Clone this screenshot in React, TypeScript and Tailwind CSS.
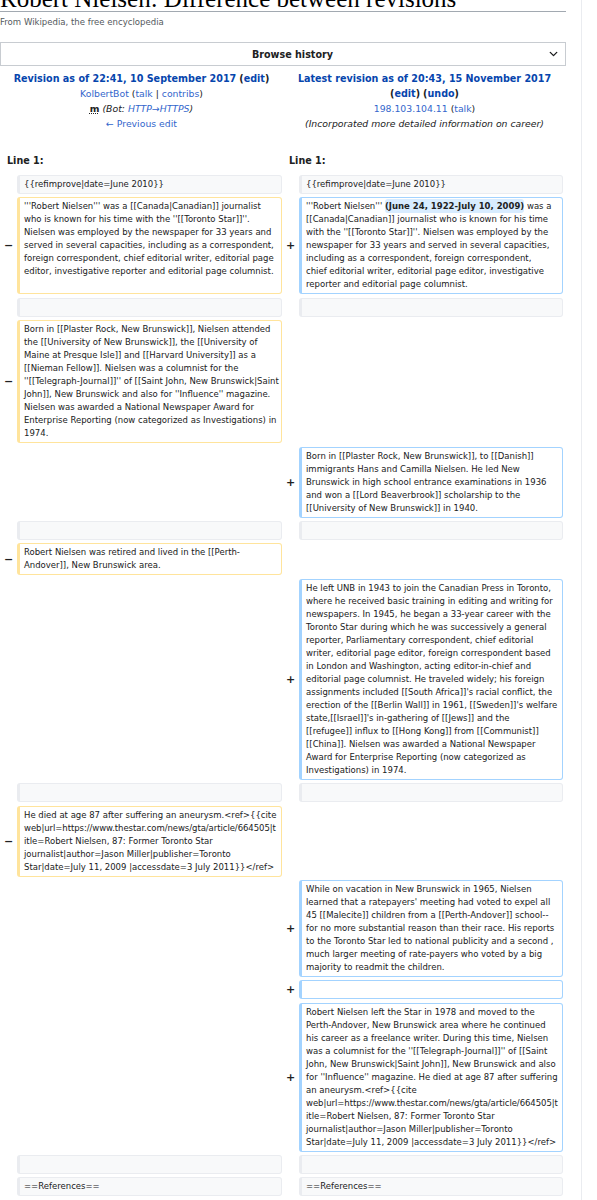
import React from "react";
import { ChevronDown } from "lucide-react";

type Kind = "ctx" | "del" | "add";
type Cell = { kind: Kind; lines: React.ReactNode[] } | null;
type Row = { left: Cell; right: Cell };

const citeLines: React.ReactNode[] = [
  <span className="tracking-[-0.06px]">
    web|url=https://www.thestar.com/news/gta/article/664505|t
  </span>,
  "itle=Robert Nielsen, 87: Former Toronto Star",
  "journalist|author=Jason Miller|publisher=Toronto",
  "Star|date=July 11, 2009 |accessdate=3 July 2011}}</ref>",
];

const rows: Row[] = [
  {
    left: { kind: "ctx", lines: ["{{refimprove|date=June 2010}}"] },
    right: { kind: "ctx", lines: ["{{refimprove|date=June 2010}}"] },
  },
  {
    left: {
      kind: "del",
      lines: [
        "'''Robert Nielsen''' was a [[Canada|Canadian]] journalist",
        "who is known for his time with the ''[[Toronto Star]]''.",
        "Nielsen was employed by the newspaper for 33 years and",
        "served in several capacities, including as a correspondent,",
        "foreign correspondent, chief editorial writer, editorial page",
        "editor, investigative reporter and editorial page columnist.",
      ],
    },
    right: {
      kind: "add",
      lines: [
        <>
          {"'''Robert Nielsen''' "}
          <span className="bg-[#d8ecff] font-bold rounded-[3px] py-[2px]">
            (June 24, 1922-July 10, 2009)
          </span>
          {" was a"}
        </>,
        "[[Canada|Canadian]] journalist who is known for his time",
        "with the ''[[Toronto Star]]''. Nielsen was employed by the",
        "newspaper for 33 years and served in several capacities,",
        "including as a correspondent, foreign correspondent,",
        "chief editorial writer, editorial page editor, investigative",
        "reporter and editorial page columnist.",
      ],
    },
  },
  { left: { kind: "ctx", lines: [] }, right: { kind: "ctx", lines: [] } },
  {
    left: {
      kind: "del",
      lines: [
        "Born in [[Plaster Rock, New Brunswick]], Nielsen attended",
        "the [[University of New Brunswick]], the [[University of",
        "Maine at Presque Isle]] and [[Harvard University]] as a",
        "[[Nieman Fellow]]. Nielsen was a columnist for the",
        "''[[Telegraph-Journal]]'' of [[Saint John, New Brunswick|Saint",
        "John]], New Brunswick and also for ''Influence'' magazine.",
        "Nielsen was awarded a National Newspaper Award for",
        "Enterprise Reporting (now categorized as Investigations) in",
        "1974.",
      ],
    },
    right: null,
  },
  {
    left: null,
    right: {
      kind: "add",
      lines: [
        "Born in [[Plaster Rock, New Brunswick]], to [[Danish]]",
        "immigrants Hans and Camilla Nielsen. He led New",
        "Brunswick in high school entrance examinations in 1936",
        "and won a [[Lord Beaverbrook]] scholarship to the",
        "[[University of New Brunswick]] in 1940.",
      ],
    },
  },
  { left: { kind: "ctx", lines: [] }, right: { kind: "ctx", lines: [] } },
  {
    left: {
      kind: "del",
      lines: [
        "Robert Nielsen was retired and lived in the [[Perth-",
        "Andover]], New Brunswick area.",
      ],
    },
    right: null,
  },
  {
    left: null,
    right: {
      kind: "add",
      lines: [
        "He left UNB in 1943 to join the Canadian Press in Toronto,",
        "where he received basic training in editing and writing for",
        "newspapers. In 1945, he began a 33-year career with the",
        "Toronto Star during which he was successively a general",
        "reporter, Parliamentary correspondent, chief editorial",
        "writer, editorial page editor, foreign correspondent based",
        "in London and Washington, acting editor-in-chief and",
        "editorial page columnist. He traveled widely; his foreign",
        "assignments included [[South Africa]]'s racial conflict, the",
        "erection of the [[Berlin Wall]] in 1961, [[Sweden]]'s welfare",
        "state,[[Israel]]'s in-gathering of [[Jews]] and the",
        "[[refugee]] influx to [[Hong Kong]] from [[Communist]]",
        "[[China]]. Nielsen was awarded a National Newspaper",
        "Award for Enterprise Reporting (now categorized as",
        "Investigations) in 1974.",
      ],
    },
  },
  { left: { kind: "ctx", lines: [] }, right: { kind: "ctx", lines: [] } },
  {
    left: {
      kind: "del",
      lines: ["He died at age 87 after suffering an aneurysm.<ref>{{cite", ...citeLines],
    },
    right: null,
  },
  {
    left: null,
    right: {
      kind: "add",
      lines: [
        "While on vacation in New Brunswick in 1965, Nielsen",
        "learned that a ratepayers' meeting had voted to expel all",
        "45 [[Malecite]] children from a [[Perth-Andover]] school--",
        "for no more substantial reason than their race. His reports",
        "to the Toronto Star led to national publicity and a second ,",
        "much larger meeting of rate-payers who voted by a big",
        "majority to readmit the children.",
      ],
    },
  },
  { left: null, right: { kind: "add", lines: [] } },
  {
    left: null,
    right: {
      kind: "add",
      lines: [
        "Robert Nielsen left the Star in 1978 and moved to the",
        "Perth-Andover, New Brunswick area where he continued",
        "his career as a freelance writer. During this time, Nielsen",
        "was a columnist for the ''[[Telegraph-Journal]]'' of [[Saint",
        "John, New Brunswick|Saint John]], New Brunswick and also",
        "for ''Influence'' magazine. He died at age 87 after suffering",
        "an aneurysm.<ref>{{cite",
        ...citeLines,
      ],
    },
  },
  { left: { kind: "ctx", lines: [] }, right: { kind: "ctx", lines: [] } },
  {
    left: { kind: "ctx", lines: ["==References=="] },
    right: { kind: "ctx", lines: ["==References=="] },
  },
];

function Marker({ cell }: { cell: Cell }) {
  let sign = "";
  if (cell && cell.kind === "del") sign = "−";
  if (cell && cell.kind === "add") sign = "+";
  return (
    <div className="flex items-center justify-center font-bold text-[11px] leading-[13px] text-[#202122]">
      {sign}
    </div>
  );
}

function Content({ cell }: { cell: Cell }) {
  if (!cell) return <div />;
  const cls =
    cell.kind === "ctx"
      ? "bg-[#f8f9fa] border-[#eaecf0]"
      : cell.kind === "del"
      ? "bg-white border-[#ffe49c]"
      : "bg-white border-[#a3d3ff]";
  return (
    <div
      className={`${cls} border border-l-[3px] rounded-[3px] px-[4px] py-[2px] text-[8.5px] leading-[13px] text-[#202122] whitespace-nowrap min-w-0`}
    >
      {cell.lines.length === 0 ? (
        <br />
      ) : (
        cell.lines.map((l, i) => (
          <React.Fragment key={i}>
            {i > 0 && <br />}
            {l}
          </React.Fragment>
        ))
      )}
    </div>
  );
}

export default function App() {
  return (
    <div className="w-[582px] min-h-[1200px] border-r border-[#eaecf0] bg-white font-['DejaVu_Sans',sans-serif] text-[#202122] overflow-hidden">
      <div className="w-[566px]">
        <h1 className="mt-[-14px] font-['Liberation_Serif',serif] text-[25px] leading-[25px] font-normal text-black border-b border-[#a2a9b1] whitespace-nowrap">
          Robert Nielsen: Difference between revisions
        </h1>
        <div className="mt-[4px] text-[8.55px] leading-[13px] text-[#54595d]">
          From Wikipedia, the free encyclopedia
        </div>
        <div className="relative mt-[13px] h-[24px] pl-[19px] border border-[#c8ccd1] flex items-center justify-center bg-white">
          <span className="font-bold text-[9.6px] leading-[15px]">Browse history</span>
          <ChevronDown
            className="absolute right-[5px] top-1/2 -translate-y-1/2 text-[#202122]"
            size={13}
            strokeWidth={2.5}
          />
        </div>

        <div className="mt-[5px] grid grid-cols-2 text-[9.3px] leading-[15px] text-center">
          <div>
            <div className="text-[9.6px]">
              <a className="font-bold text-[#0645ad]">Revision as of 22:41, 10 September 2017</a>{" "}
              <span className="font-bold">
                (<a className="text-[#0645ad]">edit</a>)
              </span>
            </div>
            <div>
              <a className="text-[#3366cc]">KolbertBot</a> (
              <a className="text-[#3366cc]">talk</a> |{" "}
              <a className="text-[#3366cc]">contribs</a>)
            </div>
            <div>
              <abbr className="font-bold underline decoration-dotted">m</abbr>{" "}
              <span className="italic">
                (Bot: <a className="text-[#3366cc]">HTTP→HTTPS</a>)
              </span>
            </div>
            <div>
              <a className="text-[#3366cc]">← Previous edit</a>
            </div>
          </div>
          <div>
            <div className="text-[9.6px]">
              <a className="font-bold text-[#0645ad]">Latest revision as of 20:43, 15 November 2017</a>
              <br />
              <span className="font-bold">
                (<a className="text-[#0645ad]">edit</a>)
              </span>{" "}
              <span className="font-bold">
                (<a className="text-[#0645ad]">undo</a>)
              </span>
            </div>
            <div>
              <a className="text-[#3366cc]">198.103.104.11</a> (
              <a className="text-[#3366cc]">talk</a>)
            </div>
            <div className="italic">(Incorporated more detailed information on career)</div>
          </div>
        </div>

        <div className="mt-[22px] grid grid-cols-[282px_284px] text-[9.6px] leading-[15px] font-bold">
          <div className="pl-[7px]">Line 1:</div>
          <div className="pl-[7px]">Line 1:</div>
        </div>

        <div className="mt-[7px] grid grid-cols-[17px_265px_17px_264px] gap-y-[3.4px]">
          {rows.map((r, i) => (
            <React.Fragment key={i}>
              <Marker cell={r.left} />
              <Content cell={r.left} />
              <Marker cell={r.right} />
              <Content cell={r.right} />
            </React.Fragment>
          ))}
        </div>
      </div>
    </div>
  );
}
